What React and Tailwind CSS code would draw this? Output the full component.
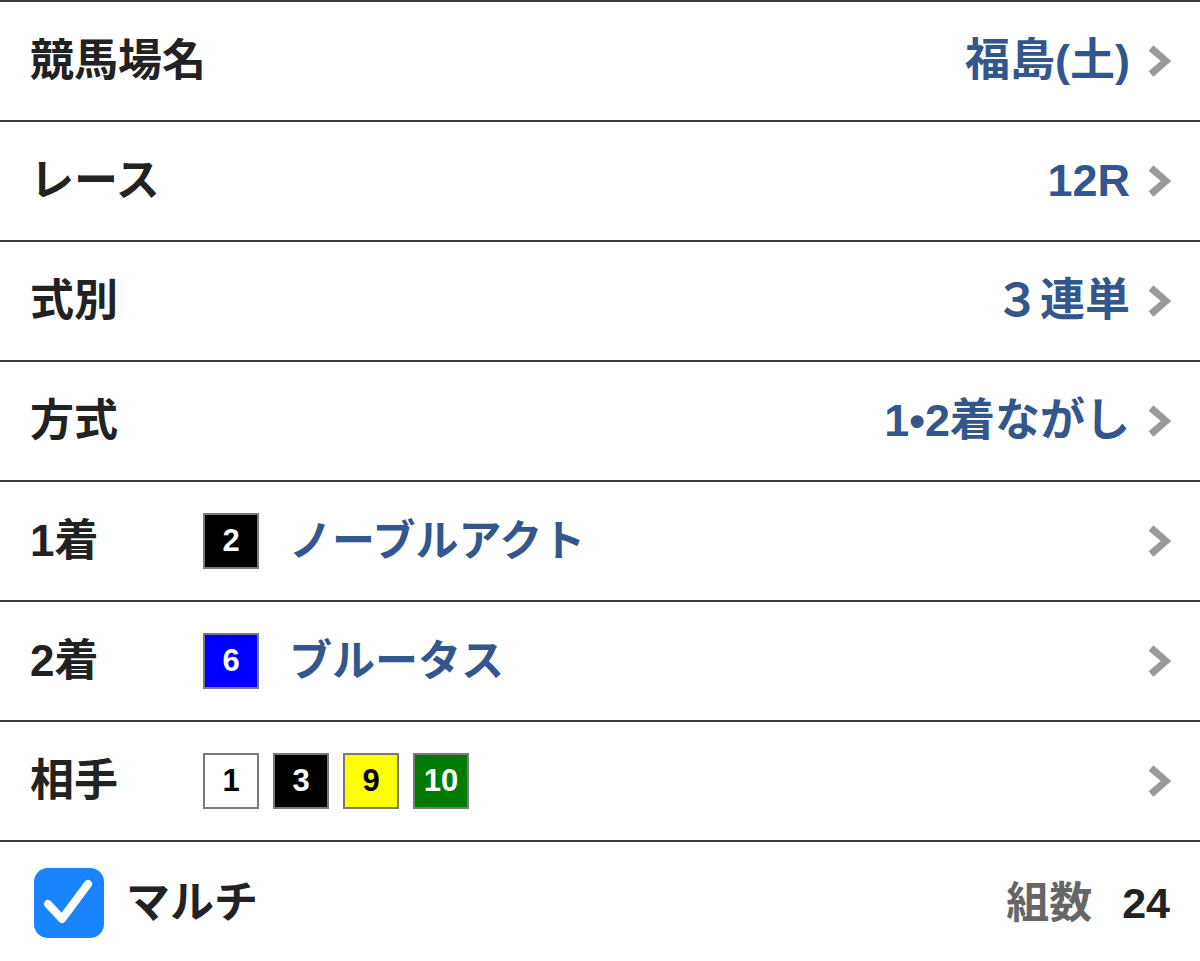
import React from 'react';

const FONT = { fontFamily: '"Liberation Sans", "Noto Sans CJK JP", sans-serif' };

const Chevron = () => (
  <svg width="26" height="34" viewBox="0 0 26 34" className="ml-[16px] mr-[-2px] shrink-0">
    <polyline points="5,4 20,17 5,30" fill="none" stroke="#9a9a9a" strokeWidth="7" strokeLinecap="butt" strokeLinejoin="miter" />
  </svg>
);

const Waku = ({ n, bg, fg }) => (
  <div
    className="flex h-[56px] w-[56px] items-center justify-center border-2 border-[#7a7a7a] text-[31px] font-bold"
    style={{ backgroundColor: bg, color: fg }}
  >
    {n}
  </div>
);

const Row = ({ label, value, children }) => (
  <div className="flex h-[120px] items-center border-b-2 border-[#3c3c3c] pl-[30px] pr-[30px]">
    <div className="w-[173px] shrink-0 whitespace-nowrap text-[44px] font-bold text-[#222]">{label}</div>
    <div className="flex flex-1 items-center">{children}</div>
    {value && <div className="whitespace-nowrap text-[45px] font-bold text-[#33568c]">{value}</div>}
    <Chevron />
  </div>
);

export default function App() {
  return (
    <div className="h-[961px] w-[1200px] overflow-hidden border-t-2 border-[#3c3c3c] bg-white" style={FONT}>
      <Row label="競馬場名" value="福島(土)" />
      <Row label="レース" value="12R" />
      <Row label="式別" value="３連単" />
      <Row label="方式" value="1•2着ながし" />
      <Row label="1着">
        <Waku n="2" bg="#000" fg="#fff" />
        <span className="ml-[30px] whitespace-nowrap text-[43px] font-bold text-[#33568c]">ノーブルアクト</span>
      </Row>
      <Row label="2着">
        <Waku n="6" bg="#0000ff" fg="#fff" />
        <span className="ml-[30px] whitespace-nowrap text-[43px] font-bold text-[#33568c]">ブルータス</span>
      </Row>
      <Row label="相手">
        <div className="flex gap-[14px]">
          <Waku n="1" bg="#fff" fg="#000" />
          <Waku n="3" bg="#000" fg="#fff" />
          <Waku n="9" bg="#ffff00" fg="#000" />
          <Waku n="10" bg="#007a00" fg="#fff" />
        </div>
      </Row>
      <div className="flex h-[118px] items-center pl-[34px] pr-[30px] pt-[4px]">
        <div className="h-[70px] w-[70px] rounded-[14px] bg-[#1a84ff]">
          <svg width="70" height="70" viewBox="0 0 70 70">
            <polyline points="14,36 28,51 54,16" fill="none" stroke="#fff" strokeWidth="8" strokeLinecap="round" strokeLinejoin="round" />
          </svg>
        </div>
        <span className="ml-[22px] whitespace-nowrap text-[44px] font-bold text-[#222]">マルチ</span>
        <div className="flex-1" />
        <span className="whitespace-nowrap text-[43px] font-bold text-[#666]">組数</span>
        <span className="ml-[30px] text-[43px] font-bold text-[#222]">24</span>
      </div>
    </div>
  );
}
